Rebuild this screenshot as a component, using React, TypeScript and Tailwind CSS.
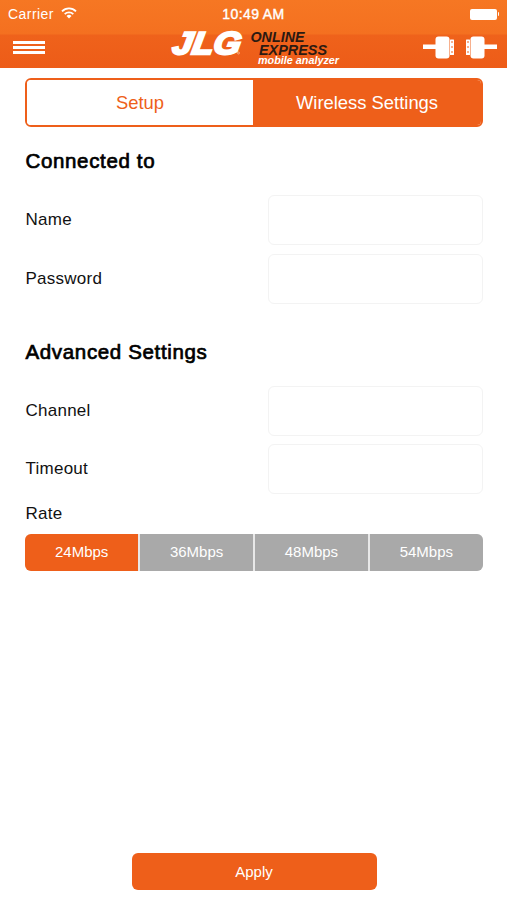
import { useState } from 'react';

interface FieldProps {
  label: string;
  type?: string;
}

const rates = ['24Mbps', '36Mbps', '48Mbps', '54Mbps'];

function Field({ label, type = 'text' }: FieldProps) {
  return (
    <label className="flex h-[50px] items-center justify-between">
      <span className="pl-[0.5px] text-[17px] tracking-[0.25px]">{label}</span>
      <input
        type={type}
        className="h-[50px] w-[215px] rounded-md border border-[#f3f3f3] bg-white px-3 text-[17px] outline-none"
      />
    </label>
  );
}

function Logo() {
  return (
    <svg width="172" height="40" viewBox="168 28 172 40" className="overflow-visible" role="img" aria-label="JLG Online Express">
      <g fontFamily="'Liberation Sans', sans-serif" fontStyle="italic" fontWeight="bold">
        <g transform="translate(171.5 54) skewX(-9)" fill="#fff" stroke="#fff" strokeWidth="2.4">
          <text x="0" y="0" fontSize="31.5" textLength="68" lengthAdjust="spacingAndGlyphs">
            JLG
          </text>
        </g>
        <text x="250.5" y="41.5" fontSize="15" fill="#2b1a12" textLength="54" lengthAdjust="spacingAndGlyphs">
          ONLINE
        </text>
        <text x="259" y="54.5" fontSize="15" fill="#2b1a12" textLength="68" lengthAdjust="spacingAndGlyphs">
          EXPRESS
        </text>
        <text x="258" y="64" fontSize="11" fill="#fff" textLength="81" lengthAdjust="spacingAndGlyphs">
          mobile analyzer
        </text>
      </g>
      <circle cx="238.5" cy="53" r="1" fill="none" stroke="#fbd3b8" strokeWidth="0.6" />
    </svg>
  );
}

// One half of the cable connector, prongs facing right
function Plug({ className = '' }: { className?: string }) {
  return (
    <svg width="31" height="24" viewBox="0 0 31 24" fill="#fff" className={className}>
      <rect x="0" y="8.5" width="13.5" height="4.5" />
      <rect x="12.5" y="0.5" width="14" height="22" rx="3" />
      <rect x="27" y="3.5" width="4" height="15.5" rx="0.5" />
      <path d="M29 5v2M29 10v2M29 15v2" stroke="#ef641c" strokeWidth="1" />
    </svg>
  );
}

function StatusBar() {
  return (
    <div className="grid h-7 grid-cols-3 items-center pr-2 pl-2 text-[14px]">
      <div className="flex items-center gap-[7px]">
        <span className="tracking-[0.45px]">Carrier</span>
        <svg width="16" height="12" viewBox="0 0 16 12" fill="none" stroke="#fff" strokeWidth="1.8" className="-mt-0.5">
          <path d="M1 4.3a10 10 0 0 1 14 0M3.7 7.1a6.2 6.2 0 0 1 8.6 0" />
          <path d="M5.5 9a3.6 3.6 0 0 1 5 0L8 11.5z" fill="#fff" stroke="none" />
        </svg>
      </div>
      <span className="text-center tracking-[0.4px] whitespace-nowrap [-webkit-text-stroke:0.4px_white]">10:49 AM</span>
      <div className="flex items-center justify-end">
        <div className="h-[11px] w-[27px] rounded-[2px] bg-white" />
        <div className="ml-px h-1 w-[1.5px] rounded-r bg-white" />
      </div>
    </div>
  );
}

export default function App() {
  const [tab, setTab] = useState('Wireless Settings');
  const [rate, setRate] = useState('24Mbps');

  return (
    <div className="flex h-[900px] w-[507px] flex-col bg-white font-['Liberation_Sans',sans-serif] text-[#111]">
      <header className="h-[68px] bg-[linear-gradient(#f67723_0,#f47020_34px,#ef621b_35px,#ed5c18_68px)] text-white">
        <StatusBar />
        <div className="flex h-10 items-center pr-[10px] pl-[13px]">
          <button className="mb-[2px] flex w-[155px] shrink-0 flex-col gap-[2px]" aria-label="Menu">
            <span className="h-[3px] w-8 bg-white" />
            <span className="h-[3px] w-8 bg-white" />
            <span className="h-[3px] w-8 bg-white" />
          </button>
          <Logo />
          <div className="ml-auto flex justify-end gap-3">
            <Plug />
            <Plug className="-scale-x-100" />
          </div>
        </div>
      </header>

      <main className="flex flex-1 flex-col px-[25px] pt-[10px]">
        <div className="mr-[-1px] grid h-[49px] grid-cols-[226px_1fr] overflow-hidden rounded-md border-2 border-[#ee5f1a] text-[18.4px]">
          {['Setup', 'Wireless Settings'].map((name) => (
            <button
              key={name}
              onClick={() => setTab(name)}
              className={`pt-px ${tab === name ? 'bg-[#ee5f1a] text-white' : 'bg-white text-[#ee5f1a]'}`}
            >
              {name}
            </button>
          ))}
        </div>

        <h2 className="mt-5 h-7 pl-[0.5px] text-[20.5px] leading-7 tracking-[0.65px] text-black [-webkit-text-stroke:0.7px_black]">Connected to</h2>
        <div className="mt-5 mr-[-1px] flex flex-col gap-[8.5px]">
          <Field label="Name" />
          <Field label="Password" type="password" />
        </div>

        <h2 className="mt-[34.5px] h-7 pl-[0.5px] text-[20.5px] leading-7 tracking-[0.65px] text-black [-webkit-text-stroke:0.7px_black]">Advanced Settings</h2>
        <div className="mt-[19.5px] mr-[-1px] flex flex-col gap-[8.5px]">
          <Field label="Channel" />
          <Field label="Timeout" />
        </div>

        <span className="mt-[8px] h-6 pl-[0.5px] text-[17px] leading-6 tracking-[0.25px]">Rate</span>
        <div className="mt-[8px] mr-[-1px] grid h-[37px] grid-cols-4 gap-[1.5px] overflow-hidden rounded-md bg-[#e8e8e8] text-[15px] text-white">
          {rates.map((r) => (
            <button key={r} onClick={() => setRate(r)} className={rate === r ? 'bg-[#ee5f1a]' : 'bg-[#a9a9a9]'}>
              {r}
            </button>
          ))}
        </div>

        <button className="mt-auto mr-[-1px] mb-[10px] h-[37px] w-[245px] self-center rounded-md bg-[#ee5f1a] pt-px text-[15px] text-white">
          Apply
        </button>
      </main>
    </div>
  );
}
